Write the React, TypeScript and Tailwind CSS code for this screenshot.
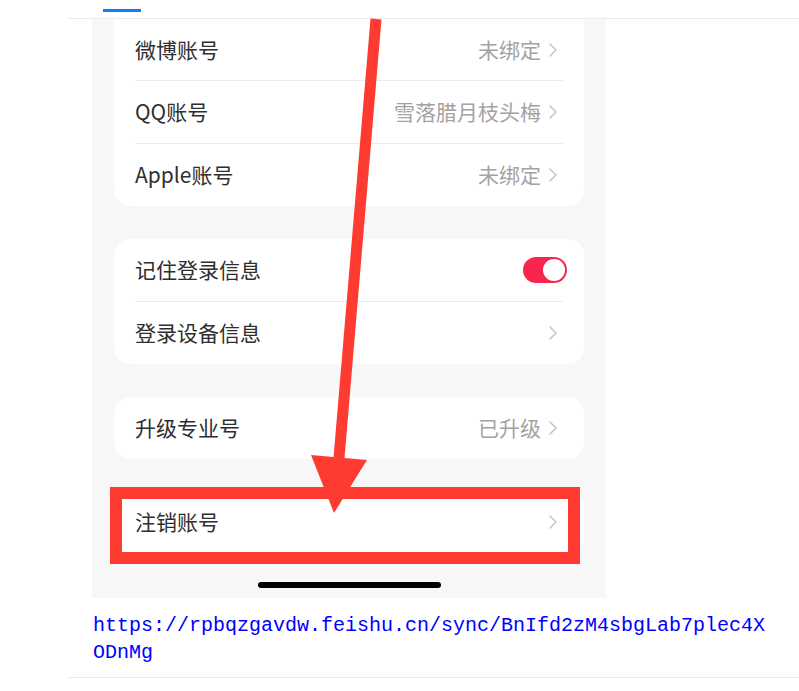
import { ReactElement } from "react";

type RowType = {
  label: string;
  value?: string;
  toggle?: boolean;
  height?: string;
};

const Chevron = (): ReactElement => (
  <svg width="10" height="16" viewBox="0 0 10 16" className="shrink-0">
    <path d="M2 2 L8 8 L2 14" fill="none" stroke="#c6c6c6" strokeWidth="1.6" strokeLinecap="round" strokeLinejoin="round" />
  </svg>
);

const Toggle = (): ReactElement => (
  <div className="w-[44px] h-[26px] rounded-full bg-[#f8264d] flex items-center justify-end pr-[2px]">
    <div className="w-[22px] h-[22px] rounded-full bg-white" />
  </div>
);

const Row = ({ label, value, toggle, height }: RowType): ReactElement => (
  <div className={`flex items-center justify-between pl-[21px] pr-[17px] ${height ?? "h-[62px]"}`}>
    <span className="text-[21px] text-[#2e2e2e]">{label}</span>
    {toggle ? (
      <Toggle />
    ) : (
      <span className="flex items-center gap-[7px] pr-[9px] text-[21px] text-[#a3a3a3]">
        {value}
        <Chevron />
      </span>
    )}
  </div>
);

const Divider = (): ReactElement => <div className="mx-[21px] h-px bg-[#ececec]" />;

const App = (): ReactElement => {
  return (
    <div
      className="relative w-[799px] h-[691px] bg-white overflow-hidden"
      style={{ fontFamily: '"Noto Sans CJK SC", "Noto Sans", sans-serif' }}
    >
      <div className="ml-[68px] h-[19px] border-b border-[#ececec] pt-[9px]">
        <div className="ml-[35px] w-[38px] h-[3px] bg-[#1677ff]" />
      </div>

      <div className="ml-[92px] w-[514px] h-[579px] bg-[#f7f7f7] px-[22px] flex flex-col">
        <div className="bg-white rounded-b-[16px]">
          <Row label="微博账号" value="未绑定" height="h-[61px]" />
          <Divider />
          <Row label="QQ账号" value="雪落腊月枝头梅" />
          <Divider />
          <Row label="Apple账号" value="未绑定" />
        </div>

        <div className="mt-[33px] bg-white rounded-[16px]">
          <Row label="记住登录信息" toggle />
          <Divider />
          <Row label="登录设备信息" value="" />
        </div>

        <div className="mt-[33px] bg-white rounded-[16px]">
          <Row label="升级专业号" value="已升级" />
        </div>

        <div className="mt-[32px] bg-white rounded-[16px]">
          <Row label="注销账号" value="" />
        </div>

        <div className="mt-[29px] self-center w-[183px] h-[6px] rounded-full bg-black" />
      </div>

      <div
        className="ml-[93px] mt-[14px] w-[680px] break-all text-[20px] leading-[27px] text-[#0000ff]"
        style={{ fontFamily: '"Liberation Mono", monospace' }}
      >
        https://rpbqzgavdw.feishu.cn/sync/BnIfd2zM4sbgLab7plec4XODnMg
      </div>

      <div className="absolute left-[68px] right-0 top-[677px] h-px bg-[#ececec]" />

      {/* annotation overlay */}
      <svg className="absolute inset-0 pointer-events-none" width="799" height="691">
        <rect x="116" y="493" width="458" height="65" fill="none" stroke="#fe3b30" strokeWidth="12" />
        <line x1="376" y1="19" x2="339" y2="458" stroke="#fe3b30" strokeWidth="11" />
        <polygon points="311,455 367,460 334,513" fill="#fe3b30" />
      </svg>
    </div>
  );
};

export default App;
